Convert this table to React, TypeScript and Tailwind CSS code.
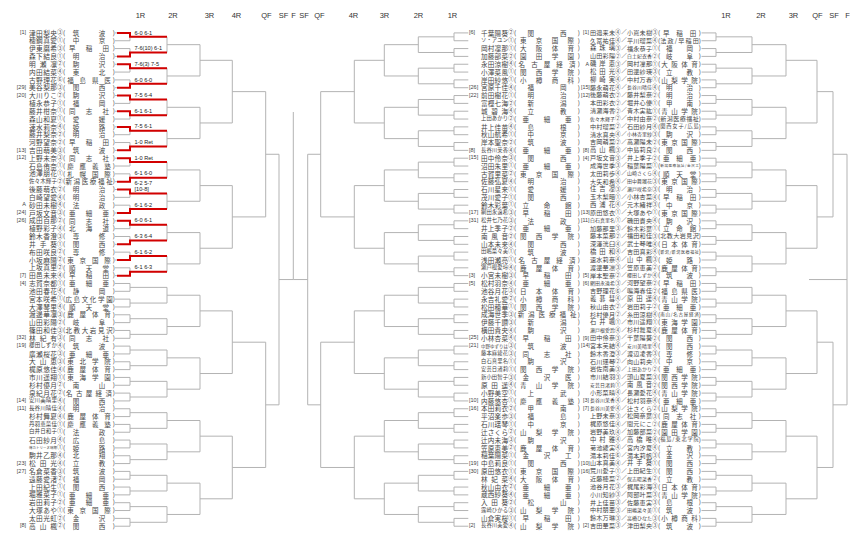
import React from "react";

// row geometry shared by all three draws (64 lines each)
const ROW = 7.83;
const TOP = 29;
const cy = (i: number) => TOP + ROW * i + ROW / 2;
const mid = (r: number, s: number) => cy(r + (s - 1) / 2);

// seed|name|circled|school
const left = [
  "[1]|津田梨央|③|筑波", "|穂鋼真愛|①|中京", "|伊東磨希|③|早稲田", "|森下結良|①|明治",
  "|明瀬凛|②|駒沢", "|内田結菜|④|東北", "|古野理花|⑥|福島県医", "[29]|美谷梨那|③|関西",
  "[20]|大川りこ|②|駒沢", "|植永恭子|①|福岡", "|藤井柑奈|①|同志社", "|森山和夏|①|愛媛",
  "|速水莉奈|④|姫路", "|藤井梨奈|②|明治", "|河野望奈|②|早稲田", "[13]|吉田萌美|③|筑波",
  "[12]|上野未奈|③|同志社", "|石島侑奈|①|慶應義塾", "|池澤朋花|①|札幌国際", "|佐々木輝子|②|新潟医療福祉",
  "|後藤萌衣|②|明治", "|白崎望愛|④|明治", "A|砂田未樹|④|法政", "[24]|戸坂文音|③|亜細亜",
  "[26]|成田百那|②|同志社", "|植野彩子|④|北海道", "|鈴木香澄|③|専修", "|井手葵|①|関西",
  "|布田咲良|②|専修", "|小坂麻陽|②|東京国際", "|上坂真里|②|順天堂", "[7]|田邑未来|④|早稲田",
  "[4]|志賀奈都|①|亜細亜", "|池田春花|④|静岡", "|宮本咲希|①|広島文化学園", "|大澤琴里|④|順天堂",
  "|渡邊華凛|③|鹿屋体育", "|山田彩陽|②|岐阜", "|篠田和佳|③|北教大岩見沢", "[32]|林紀有|③|同志社",
  "[19]|櫻田しずか|④|筑波", "|廣瀬桜花|③|亜細亜", "|大山恵|③|東北学院", "|梶原悠佳|④|鹿屋体育",
  "|市川遥翔|①|東海学園", "|杉村優月|②|南山", "|泉紀月花|②|名古屋経済", "[14]|安川美晴里|④|関西",
  "[11]|長谷川晴佳|④|明治", "|杉村舞夏|④|鹿屋体育", "|丹羽恵菜佳|①|慶應義塾", "|白井日和子|①|法政",
  "|石田紗月|④|広島", "|傳カトリーヌ瑞穂|①|姫路", "|駒井乙那|④|北翔", "[23]|松田光|④|立教",
  "[27]|名倉菜香|③|筑波", "|遠藤愛渚|②|福岡", "|上田紀生|①|関西", "|堀雅菜子|①|亜細亜",
  "|岩田莉子|②|亜細亜", "|大塚あや|①|東京国際", "|太田光虹|②|金沢", "[8]|高山楓|②|関西",
];

const right = [
  "[6]|千葉陽葵|②|関西", "|ソ・アユン|①|東京国際", "|岡村凜那|①|大阪体育", "|加藤部菜|②|園田学園",
  "|永田涼樹|④|名古屋経済", "|小澤菜風|①|関西学院", "|岸田紗悠|①|小樽商科", "[26]|宮原千佳|④|福岡",
  "[22]|前田樹花|①|明治", "|富樫七海|②|新潟", "|城碧海|④|立教", "|上田あかり|②|亜細亜",
  "|井上佳苗|④|島根", "|秋山航希|①|中京", "|岸本聖奈|②|筑波", "[8]|長谷川茉香|④|亜細亜",
  "[15]|田中伶奈|③|関西", "|沼田朱里|①|亜細亜", "|古賀里菜|②|東京国際", "|佐藤弘夏|④|明治",
  "|石川星来|①|愛媛", "|茂川愛子|①|関西", "|鈴木彩葉|①|立命館", "[17]|網田永遠希|③|早稲田",
  "[31]|松井七乃花|③|法政", "|井上季子|②|亜細亜", "|南風音|②|関西学院", "|山本未来|④|関西",
  "|田嶋菜々美|①|筑波", "|浅田瀬亮|①|名古屋経済", "|瀬戸根愛玲|④|鹿屋体育", "[3]|小宮未樹|③|早稲田",
  "[5]|松村羽奈|④|亜細亜", "|池谷月花|③|日本体育", "|永吉礼愛|②|小樽商科", "|松田穂華|①|関西学院",
  "|成海世季|③|新潟医療福祉", "|伊藤千讃|③|新潟", "|横田貴央|④|駒沢", "[25]|小林杏菜|④|早稲田",
  "[21]|中野ゆずりは|③|筑波", "|藤本麻綾花|③|同志社", "|白石真里名|①|駒沢", "|安芸日渚莉|①|関西学院",
  "|新小田智子|③|金沢医", "|原田遥|④|青山学院", "|小野美空|①|上武", "[10]|内藤悠杏|①|慶應義塾",
  "[16]|本田莉衣|②|甲南", "|平沼楽歩|③|福島", "|石川瑶琴|①|中京", "|辻さくら|②|山梨学院",
  "|辻内未海|③|駒沢", "|笠原恵美|②|鹿屋体育", "|稲葉陽菜|①|金沢工", "[19]|中島莉良|①|関西",
  "[30]|原田悠衣|①|東京国際", "|林妃菜|④|大阪体育", "|秋山由衣|②|亜細亜", "|蔵西紗葵|④|亜細亜",
  "|入田葵|②|松山", "|露崎ひかる|③|山梨学院", "|山倉実桜|①|早稲田", "[2]|長谷川美愛|④|山梨学院",
];

// seed|name|circ|name|circ|school
const doubles = [
  "[1]|田邉来未|④|小嶌未樹|③|早稲田", "|久冨祐佳|④|平川瑠菜|④|法政/早稲田",
  "|森珠璃|③|福永恭子|①|福岡", "|山田彩陽|②|白土妃衣香|②|岐阜",
  "A|磯岸恵|③|岡村凜那|①|大阪体育", "|松田光|④|田邊紗瑛|③|立教",
  "|柳崎実|④|中村万春|①|山梨学院", "[15]|藤永萌花|④|長谷川晴佳|④|明治",
  "[12]|後藤萌衣|②|藤井梨奈|②|明治", "|本田彩衣|②|堀井心優|①|甲南",
  "|清瀬海香|②|青木実紘|①|青山学院", "|佐々木輝子|②|中村由奈|②|新潟医療福祉",
  "|中村瑠菜|②|石田紗月|④|関西女子/広島", "|清水真央|④|小林杏里紗|③|駒沢",
  "|吉岡萌菜|②|高瀬陽未|②|東京国際", "[8]|高山楓|③|中島莉良|②|関西",
  "[4]|戸坂文音|③|井上季子|②|亜細亜", "|成海世季|③|稲葉陽菜|①|新潟医療福祉/金沢工",
  "|太田莉歩|④|山崎さくら|④|順天堂", "|大矢和希|④|田中舞瑠花|③|東京国際",
  "|住吉凜|③|瀬戸咲希奈|③|明治", "|玉木梨暗|①|小林杏菜|④|早稲田",
  "|西浦花|④|元木緒祥|③|中京", "[13]|原田悠衣|①|大塚あや|①|東京国際",
  "[11]|白石真里名|①|磯田貴央|④|駒沢", "|加藤那里|③|鈴木彩葉|①|立命館",
  "|藤本菜那|②|福田和佳|③|北教大岩見沢", "|深澤洸臼|④|武士琴唯|④|日本体育",
  "|橋田和|④|吉田真彩|④|新潟/新潟医療福祉", "|速水莉奈|④|山中楓|③|姫路",
  "|渡邊華凛|③|笠原恵美|②|鹿屋体育", "[5]|岸本聖奈|②|櫻田しずか|④|筑波",
  "[6]|網田永遠希|③|河野望奈|②|早稲田", "|吉野理花|⑥|鳴海春佳|②|福島県医",
  "|義碁彗|④|原田遥|④|青山学院", "|秋山由衣|②|岩田莉子|②|亜細亜",
  "|杉村優月|②|糸田涼樹|④|南山/名古屋経済", "|石井颯|①|市川遥翔|①|東海学園",
  "|瀬戸根愛玲|④|杉村舞夏|④|鹿屋体育", "[9]|田中伶奈|③|千葉陽葵|②|関西",
  "[14]|宮本芙結|④|安川美晴里|④|関西", "|鈴木香澄|③|渡辺凌香|③|専修",
  "|石川瑶琴|②|向山莉央|①|中京", "|岩佐南美|③|上田あかり|②|亜細亜",
  "|市川結羽|③|頭山夏菜|③|関西学院", "|安芸日渚莉|①|南風音|②|関西学院",
  "|小形菜晴|④|長瀬愛花|④|青山学院", "[3]|長谷川茉香|④|松村羽奈|④|亜細亜",
  "[7]|長谷川美愛|④|辻さくら|②|山梨学院", "|上野未奈|③|松岡奈葉|③|同志社",
  "|梶原悠佳|④|間元にこ|②|鹿屋体育", "|岩野美玖|④|加藤部菜|②|園田学園",
  "|中村雅|④|高橋唯|④|福島/東北学院", "|菊池綾実|④|宮内汐夏|④|立教",
  "|滝本莉佳|⑥|滝本莉帆|③|金沢", "[10]|山本真美|④|井手葵|①|関西",
  "[16]|荒川愛子|①|上田紀生|①|関西", "|近藤穂菜|②|保志暘菜香|②|立教",
  "|池谷月花|③|梶尾彩海|③|日本体育", "|小川知紗|③|阿部叶菜|③|青山学院",
  "|井上佳苗|③|佐藤恵実|③|島根", "|中村朋亜|③|田嶋菜々美|①|筑波",
  "|鈴木万琳|③|高橋ひなた|③|小樽商科", "[2]|吉田華菜|③|津田梨央|③|筑波",
];

// 1R results, left top quarter (0 = upper line wins)
const results: [number, string, string?][] = [
  [0, "6-0 6-1"], [1, "7-6(10) 6-1"], [0, "7-6(3) 7-5"], [1, "6-0 6-0"],
  [0, "7-5 6-4"], [0, "6-1 6-1"], [0, "7-5 6-1"], [1, "1-0 Ret"],
  [0, "1-0 Ret"], [1, "6-1 6-0"], [0, "6-2 5-7", "[10-8]"], [1, "6-1 6-2"],
  [0, "6-0 6-1"], [1, "6-3 6-4"], [1, "6-1 6-2"], [1, "6-1 6-3"],
];

function bracket(stub: number, xs: number[], out: number) {
  const segs: number[][] = [];
  for (let i = 0; i < 64; i++) segs.push([stub, cy(i), xs[0], cy(i)]);
  for (let L = 1; L <= 6; L++) {
    const s = 2 ** L;
    const x = xs[L - 1];
    const nx = L < 6 ? xs[L] : out;
    for (let r = 0; r < 64; r += s) {
      segs.push([x, mid(r, s / 2), x, mid(r + s / 2, s / 2)]);
      segs.push([x, mid(r, s), nx, mid(r, s)]);
    }
  }
  return segs;
}

function Lines({ segs }: { segs: number[][] }) {
  return (
    <g stroke="#b3b3b3" strokeWidth={1} fill="none">
      {segs.map((s, i) => (
        <line key={i} x1={s[0]} y1={s[1]} x2={s[2]} y2={s[3]} />
      ))}
    </g>
  );
}

// justified text squeezed into a fixed width, like the printed draw sheet
function Fit({ text, w, fs, spread, className }: { text: string; w: number; fs: number; spread?: boolean; className: string }) {
  const len = [...text].length;
  const size = Math.min(fs, (w - 0.5) / len);
  const px = spread ? Math.max(0, (w - size * len) / (2 * len) - 0.2) : 0;
  return (
    <span
      className={`block shrink-0 whitespace-nowrap [text-align-last:justify] ${className}`}
      style={{ fontSize: size, paddingLeft: px, paddingRight: px }}
    >
      {text}
    </span>
  );
}

function School({ text, w, outer }: { text: string; w: number; outer: string }) {
  return (
    <span className={`flex shrink-0 items-center text-[6.4px] ${outer}`}>
      <span>(</span>
      <Fit text={text} w={w} fs={6.5} spread className="grow" />
      <span>)</span>
    </span>
  );
}

function LeftRow({ d }: { d: string }) {
  const [seed, name, c, sc] = d.split("|");
  return (
    <div className="flex h-[7.83px] items-center leading-none">
      <span className="w-[26px] shrink-0 text-right text-[5.5px] [font-family:'Liberation_Sans',sans-serif]">{seed}</span>
      <Fit text={name} w={28} fs={6.7} className="ml-[3px] w-[28px]" />
      <span className="w-[6px] shrink-0 text-center text-[5.5px]">{c}</span>
      <School text={sc} w={44} outer="w-[52px]" />
    </div>
  );
}

function RightRow({ d }: { d: string }) {
  const [seed, name, c, sc] = d.split("|");
  return (
    <div className="flex h-[7.83px] items-center leading-none">
      <span className="w-[12px] shrink-0 text-[5.5px] [font-family:'Liberation_Sans',sans-serif]">{seed}</span>
      <Fit text={name} w={27} fs={6.6} className="w-[27px]" />
      <span className="w-[6px] shrink-0 text-center text-[5.5px]">{c}</span>
      <School text={sc} w={59} outer="w-[66px]" />
    </div>
  );
}

function DoublesRow({ d }: { d: string }) {
  const [seed, n1, c1, n2, c2, sc] = d.split("|");
  return (
    <div className="flex h-[7.83px] items-center leading-none">
      <span className="w-[9px] shrink-0 pr-[1px] text-right text-[5.3px] [font-family:'Liberation_Sans',sans-serif]">{seed}</span>
      <Fit text={n1} w={25} fs={6.3} className="w-[25px]" />
      <span className="w-[6px] shrink-0 text-center text-[5.3px]">{c1}</span>
      <span className="w-[6px] shrink-0 text-center text-[5.5px]">／</span>
      <Fit text={n2} w={25} fs={6.3} className="w-[25px]" />
      <span className="w-[6px] shrink-0 text-center text-[5.3px]">{c2}</span>
      <School text={sc} w={37} outer="w-[43px]" />
    </div>
  );
}

const singlesHeads: [string, number][] = [
  ["1R", 140.5], ["2R", 173], ["3R", 209.5], ["4R", 236.5], ["QF", 266.5], ["SF", 283.5], ["F", 293.5],
  ["SF", 304], ["QF", 319.5], ["4R", 353.5], ["3R", 384.5], ["2R", 418.5], ["1R", 452.5],
];
const doublesHeads: [string, number][] = [
  ["1R", 726], ["2R", 761], ["3R", 793.5], ["QF", 817.5], ["SF", 834], ["F", 847.5],
];

function Heads({ items }: { items: [string, number][] }) {
  return (
    <g fill="#333" fontSize={7.5} fontFamily="Liberation Sans, Arial, sans-serif" textAnchor="middle">
      {items.map(([t, x], i) => (
        <text key={i} x={x} y={17.5}>{t}</text>
      ))}
    </g>
  );
}

export default function App() {
  const leftSegs = bracket(115, [130, 167, 200, 232.3, 265.7, 279], 293.3);
  const rightSegs = bracket(468.3, [454, 418.3, 384.3, 354.3, 320.7, 307.7], 293.3);
  const dblSegs = bracket(701.5, [716, 752, 786, 817, 833, 847], 809);

  return (
    <div className="flex h-[539px] w-[850px] overflow-hidden bg-white text-[#444] [font-family:'Noto_Sans_CJK_JP','Liberation_Sans',sans-serif]">
      {/* singles, upper half of the draw */}
      <div className="flex w-[115px] shrink-0 flex-col pt-[29px]">
        {left.map((d, i) => (
          <LeftRow key={i} d={d} />
        ))}
      </div>

      <svg width={354} height={539} viewBox="115 0 354 539" className="shrink-0">
        <Heads items={singlesHeads} />
        <Lines segs={leftSegs} />
        <Lines segs={rightSegs} />
        <line x1={293.3} y1={112} x2={293.3} y2={mid(0, 64)} stroke="#b3b3b3" strokeWidth={1} />
        {/* 1R winners + scores */}
        <g stroke="#d20000" strokeWidth={2} fill="none">
          {results.map(([w], j) => {
            const r = j * 2;
            return <path key={j} d={`M117 ${cy(r + w)} H130 V${mid(r, 2)} H167`} />;
          })}
        </g>
        <g fill="#222" fontSize={5.6} fontFamily="Liberation Sans, Arial, sans-serif">
          {results.map(([, s1, s2], j) => {
            const m = mid(j * 2, 2);
            return s2 ? (
              <g key={j}>
                <text x={134.5} y={m - 8.5}>{s1}</text>
                <text x={134.5} y={m - 2.3}>{s2}</text>
              </g>
            ) : (
              <text key={j} x={134.5} y={m - 2.3}>{s1}</text>
            );
          })}
        </g>
      </svg>

      {/* singles, lower half of the draw */}
      <div className="flex w-[112px] shrink-0 flex-col pt-[29px]">
        {right.map((d, i) => (
          <RightRow key={i} d={d} />
        ))}
      </div>

      {/* doubles */}
      <div className="flex w-[120px] shrink-0 flex-col pt-[29px]">
        {doubles.map((d, i) => (
          <DoublesRow key={i} d={d} />
        ))}
      </div>

      <svg width={149} height={539} viewBox="701 0 149 539" className="shrink-0">
        <Heads items={doublesHeads} />
        <Lines segs={dblSegs} />
      </svg>
    </div>
  );
}
